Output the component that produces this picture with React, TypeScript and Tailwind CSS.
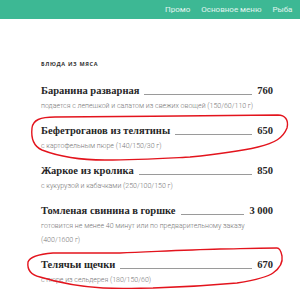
import React from "react";

interface Dish {
  name: string;
  price: string;
  note: string;
}

const dishes: Dish[] = [
  { name: "Баранина разварная", price: "760", note: "подается с лепешкой и салатом из свежих овощей (150/60/110 г)" },
  { name: "Бефетроганов из телятины", price: "650", note: "с картофельным пюре (140/150/30 г)" },
  { name: "Жаркое из кролика", price: "850", note: "с кукурузой и кабачками (250/100/150 г)" },
  { name: "Томленая свинина в горшке", price: "3 000", note: "готовится не менее 40 минут или по предварительному заказу (400/1600 г)" },
  { name: "Телячьи щечки", price: "670", note: "с пюре из сельдерея (180/150/60)" },
  { name: "Ребра свиные", price: "690", note: "" },
];

const nav = ["Промо", "Основное меню", "Рыба", "Птица"];

export default function App() {
  return (
    <div className="relative w-[300px] h-[300px] overflow-hidden bg-white">
      {/* Top bar */}
      <header className="h-[19px] bg-[#3db894] flex items-center gap-[11px] pl-[165px] whitespace-nowrap overflow-hidden text-[8px] text-white/85 font-['Roboto',sans-serif]">
        {nav.map((n) => (
          <span key={n}>{n}</span>
        ))}
      </header>

      {/* Menu */}
      <section className="pl-[41px] w-[273px] pt-[42px]">
        <h2 className="text-[5.5px] font-bold tracking-[0.12em] text-[#333] leading-[6px] font-['Open_Sans',sans-serif]">
          БЛЮДА ИЗ МЯСА
        </h2>
        <ul className="mt-[17px]">
          {dishes.map((d) => (
            <li key={d.name} className="mb-[11px]">
              <div className="flex items-end h-[14px] leading-[14px] font-['Liberation_Serif',serif] font-bold text-[10.5px] text-[#262626]">
                <span className="whitespace-nowrap">{d.name}</span>
                <span className="flex-1 mx-[5px] mb-[3px] border-b border-[#9a9a9a]" />
                <span className="whitespace-nowrap">{d.price}</span>
              </div>
              {d.note && (
                <p className="mt-[1px] text-[7px] leading-[14px] text-[#777] font-['Roboto',sans-serif] font-light">
                  {d.note}
                </p>
              )}
            </li>
          ))}
        </ul>
      </section>

      {/* Hand-drawn red annotations */}
      <svg className="absolute inset-0 pointer-events-none" width="300" height="300" viewBox="0 0 300 300" fill="none">
        <path
          d="M278 115 C 230 115, 120 117, 55 117 C 40 117, 33 120, 32 128 C 31 137, 33 146, 42 150 C 60 157, 85 160, 105 160 C 140 160, 170 158, 190 157 C 220 154, 245 150, 258 147 C 275 143, 283 138, 287 128 C 289 120, 285 115, 278 115"
          stroke="#e3141d"
          strokeWidth="1.4"
        />
        <path
          d="M277 248 C 250 248, 235 249, 220 249 C 180 250, 150 252, 120 253 C 95 253, 65 253, 53 253 C 40 254, 30 256, 28 262 C 27 270, 31 275, 40 277 C 60 283, 85 287, 103 288 C 125 289, 140 288, 153 288 C 190 287, 215 285, 237 283 C 255 280, 268 277, 273 273 C 280 268, 283 262, 282 256 C 281 251, 280 248, 277 248"
          stroke="#e3141d"
          strokeWidth="1.4"
        />
      </svg>
    </div>
  );
}
